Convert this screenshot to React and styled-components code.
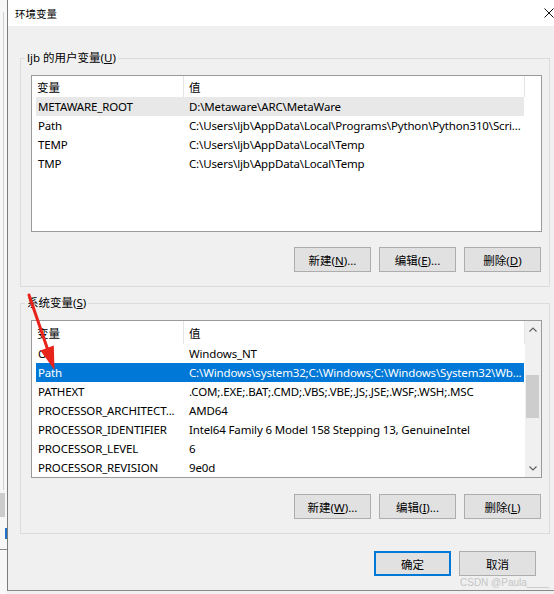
import React from "react";
import styled, { createGlobalStyle } from "styled-components";

const GlobalStyle = createGlobalStyle`
  html, body {
    margin: 0;
    padding: 0;
    background: #f0f0f0;
  }
  body {
    font-family: "Noto Sans", "Noto Sans CJK SC", sans-serif;
    font-size: 11.5px;
    color: #000;
  }
  * {
    box-sizing: border-box;
  }
`

const Page = styled.div`
  position: relative;
  display: flex;
  width: 554px;
  height: 594px;
  overflow: hidden;
  background: #f0f0f0;
`

// the window sitting behind the dialog, only a sliver of it shows
const BackWindow = styled.div`
  width: 7px;
  display: flex;
  flex-direction: column;
  background: #f7f7f7;
`
const BackPane = styled.div`
  margin: 12px 0 0 3px;
  height: 478px;
  border-left: 1px solid #cfcfcf;
`
const BackButton = styled.div`
  margin-top: 3px;
  width: 5px;
  height: 24px;
  background: #cccccc;
`
const BackAccent = styled.div`
  margin: 11px 0 0 5px;
  width: 2px;
  height: 11px;
  background: #1f74c9;
`
const BackRule = styled.div`
  margin-top: 10px;
  height: 1px;
  background: #8a8a8a;
`

const Dialog = styled.div`
  flex: 1;
  height: 591px;
  display: flex;
  flex-direction: column;
  border-left: 1px solid #7c7c7c;
  border-bottom: 1px solid #8a8a8a;
`

const TitleBar = styled.div`
  height: 26px;
  flex-shrink: 0;
  display: flex;
  align-items: center;
  justify-content: space-between;
  padding-left: 7px;
  background: #fff;
`
const Title = styled.span`
  font-size: 10.5px;
`

const Body = styled.div`
  flex: 1;
  display: flex;
  flex-direction: column;
  padding: 24px 4px 14px 12px;
  background: #f0f0f0;
`

const Group = styled.fieldset`
  margin: ${p => p.$top}px 0 0 0;
  padding: 0;
  min-width: 0;
  border: 1px solid #dcdcdc;
`
const Caption = styled.legend`
  margin-left: 4px;
  padding: 0 2px;
  line-height: 16px;
`
const GroupInner = styled.div`
  padding: 9px 7px 14px 10px;
`

const ListView = styled.div`
  display: flex;
  height: ${p => p.$height}px;
  border: 1px solid #9a9a9a;
  background: #fff;
  overflow: hidden;
`
const ListContent = styled.div`
  flex: 1;
  min-width: 0;
`
const Header = styled.div`
  display: grid;
  grid-template-columns: 152px 341px;
  height: ${p => p.$height}px;
`
const HeaderCell = styled.div`
  display: flex;
  align-items: center;
  padding-left: 5px;
  border-right: 1px solid #e5e5e5;
`
const Row = styled.div`
  display: grid;
  grid-template-columns: 148px 340px;
  width: 488px;
  height: 19px;
  margin-left: 4px;
  align-items: center;
  background: ${p => (p.$state === "active" ? "#0078d7" : p.$state === "inactive" ? "#e8e8e8" : "transparent")};
  color: ${p => (p.$state === "active" ? "#fff" : "#000")};
`
const Cell = styled.span`
  padding-left: ${p => (p.$value ? 5 : 2)}px;
  letter-spacing: -0.15px;
  white-space: nowrap;
  overflow: hidden;
`

const ScrollTrack = styled.div`
  width: 16px;
  display: flex;
  flex-direction: column;
  background: #f0f0f0;
`
const ScrollArrow = styled.div`
  height: 17px;
  display: flex;
  align-items: center;
  justify-content: center;
`
const ScrollThumb = styled.div`
  margin: ${p => p.$offset}px 2px 0 1px;
  height: ${p => p.$size}px;
  background: #cdcdcd;
`
const ScrollSpace = styled.div`
  flex: 1;
`

const ButtonRow = styled.div`
  display: flex;
  justify-content: flex-end;
  gap: 8px;
  margin-top: ${p => p.$top}px;
  padding-right: 1px;
`
const Button = styled.button`
  width: 77px;
  height: 25px;
  padding: 0;
  font: inherit;
  color: #000;
  background: #e1e1e1;
  border: ${p => (p.$primary ? "2px solid #0078d7" : "1px solid #adadad")};
`

const ActionRow = styled.div`
  display: flex;
  justify-content: flex-end;
  gap: 8px;
  margin-top: 17px;
  padding-right: 14px;
`

const ArrowLayer = styled.svg`
  position: absolute;
  left: 0;
  top: 0;
  pointer-events: none;
`

const Watermark = styled.div`
  position: absolute;
  left: 460px;
  top: 576px;
  font-family: "Liberation Sans", Arial, sans-serif;
  font-size: 10px;
  line-height: 13px;
  color: #c4c4c4;
  white-space: nowrap;
`

const userVars = [
  { name: "METAWARE_ROOT", value: "D:\\Metaware\\ARC\\MetaWare", state: "inactive" },
  { name: "Path", value: "C:\\Users\\ljb\\AppData\\Local\\Programs\\Python\\Python310\\Scri..." },
  { name: "TEMP", value: "C:\\Users\\ljb\\AppData\\Local\\Temp" },
  { name: "TMP", value: "C:\\Users\\ljb\\AppData\\Local\\Temp" },
]

const sysVars = [
  { name: "OS", value: "Windows_NT" },
  { name: "Path", value: "C:\\Windows\\system32;C:\\Windows;C:\\Windows\\System32\\Wb...", state: "active" },
  { name: "PATHEXT", value: ".COM;.EXE;.BAT;.CMD;.VBS;.VBE;.JS;.JSE;.WSF;.WSH;.MSC" },
  { name: "PROCESSOR_ARCHITECT...", value: "AMD64" },
  { name: "PROCESSOR_IDENTIFIER", value: "Intel64 Family 6 Model 158 Stepping 13, GenuineIntel" },
  { name: "PROCESSOR_LEVEL", value: "6" },
  { name: "PROCESSOR_REVISION", value: "9e0d" },
]

const Chevron = ({ up }) => (
  <svg width="8" height="5" viewBox="0 0 8 5">
    <polyline
      points={up ? "0.5,4.5 4,1 7.5,4.5" : "0.5,0.5 4,4 7.5,0.5"}
      fill="none"
      stroke="#606060"
      strokeWidth="1.2"
    />
  </svg>
)

const VarList = ({ rows, height, headerHeight, scroll }) => (
  <ListView $height={height}>
    <ListContent>
      <Header $height={headerHeight}>
        <HeaderCell>变量</HeaderCell>
        <HeaderCell>值</HeaderCell>
      </Header>
      {rows.map((r, i) => (
        <Row key={i} $state={r.state}>
          <Cell>{r.name}</Cell>
          <Cell $value>{r.value}</Cell>
        </Row>
      ))}
    </ListContent>
    {scroll && (
      <ScrollTrack>
        <ScrollArrow><Chevron up /></ScrollArrow>
        <ScrollThumb $offset={37} $size={43} />
        <ScrollSpace />
        <ScrollArrow><Chevron /></ScrollArrow>
      </ScrollTrack>
    )}
  </ListView>
)

const Label = ({ text, k }) => (
  <>
    {text}(<u>{k}</u>)
  </>
)

export default function App() {
  return (
    <Page>
      <GlobalStyle />
      <BackWindow>
        <BackPane />
        <BackButton />
        <BackAccent />
        <BackRule />
      </BackWindow>

      <Dialog>
        <TitleBar>
          <Title>环境变量</Title>
          <svg width="10" height="10" viewBox="0 0 10 10">
            <path d="M0.5 0.5 L9.5 9.5 M9.5 0.5 L0.5 9.5" stroke="#111" strokeWidth="1" />
          </svg>
        </TitleBar>

        <Body>
          <Group $top={0}>
            <Caption>ljb 的用户变量(<u>U</u>)</Caption>
            <GroupInner>
              <VarList rows={userVars} height={157} headerHeight={21} />
              <ButtonRow $top={15}>
                <Button><Label text="新建" k="N" />...</Button>
                <Button><Label text="编辑" k="E" />...</Button>
                <Button><Label text="删除" k="D" /></Button>
              </ButtonRow>
            </GroupInner>
          </Group>

          <Group $top={8}>
            <Caption>系统变量(<u>S</u>)</Caption>
            <GroupInner>
              <VarList rows={sysVars} height={158} headerHeight={23} scroll />
              <ButtonRow $top={16}>
                <Button><Label text="新建" k="W" />...</Button>
                <Button><Label text="编辑" k="I" />...</Button>
                <Button><Label text="删除" k="L" /></Button>
              </ButtonRow>
            </GroupInner>
          </Group>

          <ActionRow>
            <Button $primary>确定</Button>
            <Button>取消</Button>
          </ActionRow>
        </Body>
      </Dialog>

      <ArrowLayer width="554" height="594" viewBox="0 0 554 594">
        <line x1="29" y1="295" x2="47.5" y2="349" stroke="#e8231b" strokeWidth="3" strokeLinecap="round" />
        <polygon points="54.5,370 40.4,350.4 53.8,345.6" fill="#e8231b" />
      </ArrowLayer>

      <Watermark>CSDN @Paula____</Watermark>
    </Page>
  );
}
